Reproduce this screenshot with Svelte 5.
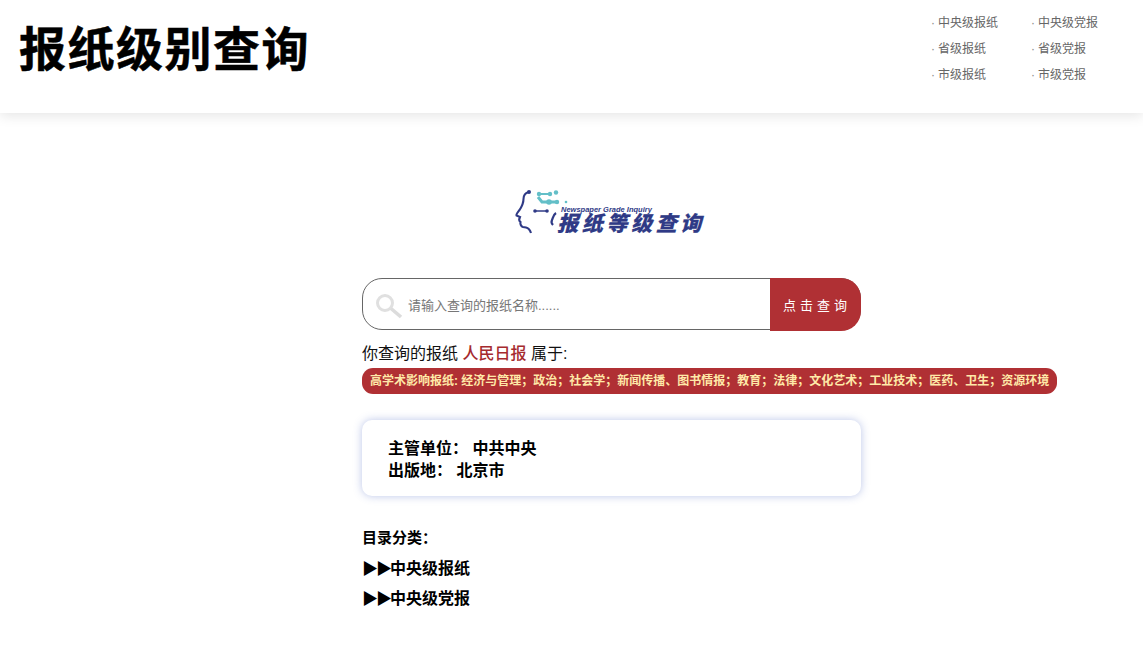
<script>
  const navLinks = [
    '中央级报纸', '中央级党报',
    '省级报纸', '省级党报',
    '市级报纸', '市级党报'
  ];
  const categories = ['中央级报纸', '中央级党报'];
</script>

<header class="top">
  <h1 class="site-title">报纸级别查询</h1>
  <nav class="top-nav">
    {#each navLinks as link}
      <a href="#top" class="nav-link">{link}</a>
    {/each}
  </nav>
</header>

<main class="page">
  <div class="logo">
    <svg class="logo-head" width="60" height="54" viewBox="0 0 60 54" fill="none">
      <path d="M17 6 C13 7 11.500 9 11.500 13 C11.500 18 9.500 21 7.500 24 C6 26 4 28 4.500 29.500 L8 31 C7 33 7 35 8.500 36 C8 38 9 40.500 11 41 L14 41.500 C16 42 18 44 19 47" stroke="#2f3a86" stroke-width="2.100"/>
      <circle cx="17" cy="6" r="2" fill="#2f3a86"/>
      <path d="M27 8 H38" stroke="#63bfc8" stroke-width="2"/>
      <circle cx="27" cy="8" r="2.200" fill="#63bfc8"/>
      <circle cx="38" cy="8" r="2.200" fill="#63bfc8"/>
      <circle cx="44" cy="6.500" r="2.200" fill="#63bfc8"/>
      <path d="M26 11 L30 16 H45" stroke="#63bfc8" stroke-width="3"/>
      <circle cx="37" cy="16" r="2.800" fill="#63bfc8"/>
      <circle cx="45" cy="16" r="2.200" fill="#63bfc8"/>
      <circle cx="54" cy="16" r="1.300" fill="#63bfc8"/>
      <path d="M23 25 H35" stroke="#2f3a86" stroke-width="1.500"/>
      <circle cx="23" cy="25" r="1.800" fill="#2f3a86"/>
      <circle cx="35" cy="25" r="1.800" fill="#2f3a86"/>
      <path d="M44 27 C41 29 41 32 40 34 C39 36 40 38 41 39" stroke="#2f3a86" stroke-width="2.200"/>
    </svg>
    <span class="logo-en">Newspaper Grade Inquiry</span>
    <span class="logo-cn">报纸等级查询</span>
  </div>

  <form class="search" onsubmit={(e) => e.preventDefault()}>
    <svg class="search-icon" width="28" height="26" viewBox="0 0 28 26" fill="none">
      <circle cx="10" cy="10" r="7.500" stroke="#e0e0e0" stroke-width="3"/>
      <path d="M16 15.500 L26 24" stroke="#dcdcdc" stroke-width="3.600"/>
    </svg>
    <input class="search-input" type="text" placeholder="请输入查询的报纸名称......" />
    <button class="search-btn" type="submit">点击查询</button>
  </form>

  <p class="result">你查询的报纸 <span class="paper">人民日报</span> 属于:</p>
  <div class="badge">高学术影响报纸: 经济与管理；政治；社会学；新闻传播、图书情报；教育；法律；文化艺术；工业技术；医药、卫生；资源环境</div>

  <section class="card">
    <p>主管单位： 中共中央</p>
    <p>出版地： 北京市</p>
  </section>

  <h2 class="cat-title">目录分类：</h2>
  {#each categories as cat}
    <a href="#top" class="cat-link"><span class="arrows">▶▶</span>{cat}</a>
  {/each}
</main>

<style>
  :global(body) {
    background: #fff;
    font-family: "Liberation Sans", "Noto Sans CJK SC", sans-serif;
    color: #000;
  }

  .top {
    height: 113px;
    display: flex;
    justify-content: space-between;
    box-shadow: 0 3px 12px rgba(0, 0, 0, .1);
  }

  .site-title {
    margin: 21px 0 0 19px;
    font-size: 47px;
    line-height: 58px;
    font-weight: 700;
    letter-spacing: 1.500px;
    -webkit-text-stroke: .5px #000;
  }

  .top-nav {
    display: grid;
    grid-template-columns: 100px 106px;
    grid-auto-rows: 26px;
    margin: 10px 6px 0 0;
    align-content: start;
  }

  .nav-link {
    font-size: 12px;
    line-height: 26px;
    color: #666;
    text-decoration: none;
  }
  .nav-link::before {
    content: "·";
    margin-right: 3px;
    color: #888;
  }

  .page {
    width: 499px;
    margin-left: 362px;
    padding-top: 73px;
  }

  .logo {
    width: 200px;
    height: 54px;
    margin-left: 150px;
    position: relative;
  }

  .logo-head {
    display: block;
  }

  .logo-en {
    position: absolute;
    left: 49px;
    top: 19px;
    font-size: 7.500px;
    line-height: 10px;
    font-weight: 700;
    font-style: italic;
    color: #2f3a86;
    white-space: nowrap;
  }

  .logo-cn {
    position: absolute;
    left: 47px;
    top: 27px;
    font-size: 21px;
    line-height: 22px;
    font-weight: 900;
    letter-spacing: 3.600px;
    color: #2f3a86;
    white-space: nowrap;
    transform: skewX(-14deg);
    -webkit-text-stroke: .2px #2f3a86;
  }

  .search {
    display: flex;
    align-items: stretch;
    height: 52px;
    margin-top: 38px;
    box-sizing: border-box;
    border: 1px solid #666;
    border-radius: 20px;
    position: relative;
  }

  .search-icon {
    position: absolute;
    left: 12px;
    top: 14px;
  }

  .search-input {
    flex: 1;
    min-width: 0;
    border: 0;
    outline: 0;
    padding: 2px 0 0 45px;
    background: transparent;
    border-radius: 20px 0 0 20px;
    font: 13px "Liberation Sans", "Noto Sans CJK SC", sans-serif;
  }
  .search-input::placeholder { color: #777; }

  .search-btn {
    flex: none;
    width: 91px;
    margin: -1px -1px -2px 0;
    border: 0;
    border-radius: 0 20px 20px 0;
    background: #b03034;
    color: #fff;
    font: 13px "Liberation Sans", "Noto Sans CJK SC", sans-serif;
    letter-spacing: 4px;
    padding: 0 0 0 3px;
  }

  .result {
    margin: 12px 0 0;
    font-size: 16px;
    line-height: 24px;
    color: #111;
  }

  .paper {
    color: #a52a2e;
    font-weight: 500;
  }

  .badge {
    width: 695px;
    height: 26px;
    margin-top: 2px;
    padding-left: 8px;
    box-sizing: border-box;
    background: #b03034;
    border-radius: 11px;
    color: #ffe9a8;
    font-size: 12px;
    line-height: 26px;
    font-weight: 700;
    white-space: nowrap;
  }

  .card {
    height: 76px;
    margin-top: 26px;
    padding: 18px 26px 0;
    box-sizing: border-box;
    border-radius: 10px;
    background: #fff;
    box-shadow: 0 0 8px rgba(60, 90, 190, .35);
  }
  .card p {
    margin: 0;
    font-size: 16px;
    line-height: 22px;
    font-weight: 700;
  }

  .cat-title {
    margin: 32px 0 0;
    font-size: 15px;
    line-height: 20px;
    font-weight: 700;
  }

  .cat-link {
    display: block;
    margin-top: 6px;
    font-size: 16px;
    line-height: 24px;
    font-weight: 700;
    color: #000;
    text-decoration: none;
  }
  .cat-title + .cat-link { margin-top: 9px; }

  .arrows {
    letter-spacing: -2px;
  }
</style>
